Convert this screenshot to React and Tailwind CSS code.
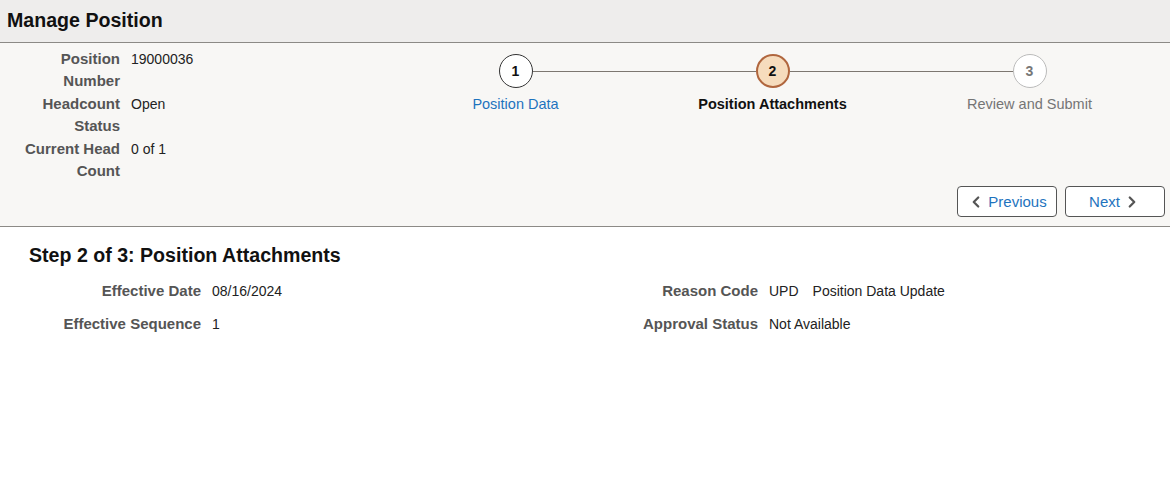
import { ChevronLeft, ChevronRight } from "lucide-react";

const summary = [
    { label: ["Position", "Number"], value: "19000036" },
    { label: ["Headcount", "Status"], value: "Open" },
    { label: ["Current Head", "Count"], value: "0 of 1" },
];

const steps = [
    { n: 1, label: "Position Data", state: "done" },
    { n: 2, label: "Position Attachments", state: "current" },
    { n: 3, label: "Review and Submit", state: "todo" },
];

function Step({ step, first, last }) {
    const circle =
        step.state === "current"
            ? "border-2 border-[#b0663e] bg-[#f6dcbd] text-[#111]"
            : step.state === "done"
            ? "border border-[#333] bg-white text-[#111]"
            : "border border-[#bbb] bg-white text-[#777]";
    const text =
        step.state === "current"
            ? "font-bold text-[#111]"
            : step.state === "done"
            ? "text-[#1e73be]"
            : "text-[#757575]";
    return (
        <div className="flex flex-col items-center">
            <div className="flex w-full items-center">
                <div className={`h-px flex-1 ${first ? "" : "bg-[#7d7771]"}`} />
                <div className={`flex h-[34px] w-[34px] items-center justify-center rounded-full text-[14px] font-bold ${circle}`}>
                    {step.n}
                </div>
                <div className={`h-px flex-1 ${last ? "" : "bg-[#7d7771]"}`} />
            </div>
            <div className={`mt-[6px] text-[14.5px] leading-[20px] ${text}`}>{step.label}</div>
        </div>
    );
}

function Field({ label, value, labelWidth }) {
    return (
        <div className="flex items-start">
            <div className={`${labelWidth} pr-[11px] text-right text-[15px] font-bold text-[#555]`}>{label}</div>
            <div className="text-[#222]">{value}</div>
        </div>
    );
}

export default function App() {
    return (
        <div className="min-h-[479px] bg-white font-['Liberation_Sans',Arial,sans-serif]">
            <header className="flex h-[43px] items-center border-b border-[#8c8a86] bg-[#eeedec] px-[7px]">
                <h1 className="text-[19.6px] font-bold text-[#111]">Manage Position</h1>
            </header>
            <div className="h-[184px] border-b border-[#8c8a86] bg-[#f8f7f5]">
                <div className="flex">
                    <div className="w-[387px] pt-[5px]">
                        {summary.map((row) => (
                            <div key={row.value} className="flex text-[14px] leading-[22.4px]">
                                <div className="w-[120px] text-right text-[15px] font-bold text-[#555]">
                                    {row.label[0]}
                                    <br />
                                    {row.label[1]}
                                </div>
                                <div className="pl-[11px] text-[#222]">{row.value}</div>
                            </div>
                        ))}
                    </div>
                    <div className="grid w-[771px] grid-cols-3 pt-[11px]">
                        {steps.map((s, i) => (
                            <Step key={s.n} step={s} first={i === 0} last={i === steps.length - 1} />
                        ))}
                    </div>
                </div>
                <div className="mt-[4px] flex justify-end gap-[8px] pr-[5px]">
                    <button className="flex h-[31px] w-[100px] items-center justify-center gap-[3px] rounded-[4px] border border-[#555] bg-white text-[15px] text-[#1e73be]">
                        <ChevronLeft size={18} strokeWidth={3} className="text-[#555]" />
                        Previous
                    </button>
                    <button className="flex h-[31px] w-[100px] items-center justify-center gap-[3px] rounded-[4px] border border-[#555] bg-white text-[15px] text-[#1e73be]">
                        Next
                        <ChevronRight size={18} strokeWidth={3} className="text-[#555]" />
                    </button>
                </div>
            </div>
            <main className="px-[29px] pt-[16px]">
                <h2 className="text-[19.6px] font-bold leading-[24px] text-[#111]">Step 2 of 3: Position Attachments</h2>
                <div className="mt-[14px] grid grid-cols-[556px_1fr] gap-y-[13px] text-[14px] leading-[20px]">
                    <Field label="Effective Date" value="08/16/2024" labelWidth="w-[183px]" />
                    <Field
                        label="Reason Code"
                        value={
                            <span>
                                UPD<span className="ml-[14px]">Position Data Update</span>
                            </span>
                        }
                        labelWidth="w-[184px]"
                    />
                    <Field label="Effective Sequence" value="1" labelWidth="w-[183px]" />
                    <Field label="Approval Status" value="Not Available" labelWidth="w-[184px]" />
                </div>
            </main>
        </div>
    );
}
